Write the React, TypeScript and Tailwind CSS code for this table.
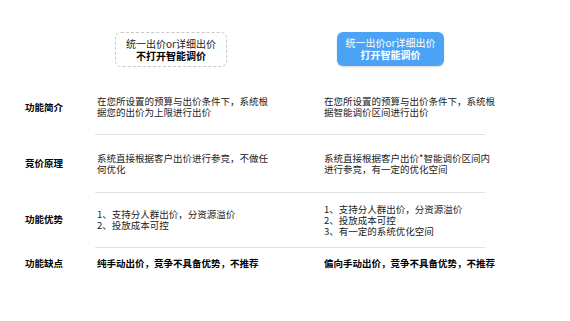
const rows = [
  {
    label: "功能简介",
    left: ["在您所设置的预算与出价条件下，系统根", "据您的出价为上限进行出价"],
    right: ["在您所设置的预算与出价条件下，系统根", "据智能调价区间进行出价"],
    h: "h-[54px]",
    top: false,
    bold: false,
  },
  {
    label: "竞价原理",
    left: ["系统直接根据客户出价进行参竞，不做任", "何优化"],
    right: ["系统直接根据客户出价*智能调价区间内", "进行参竞，有一定的优化空间"],
    h: "h-[58px]",
    top: true,
    bold: false,
  },
  {
    label: "功能优势",
    left: ["1、支持分人群出价，分资源溢价", "2、投放成本可控"],
    right: ["1、支持分人群出价，分资源溢价", "2、投放成本可控", "3、有一定的系统优化空间"],
    h: "h-[55px]",
    top: true,
    bold: false,
  },
  {
    label: "功能缺点",
    left: ["纯手动出价，竞争不具备优势，不推荐"],
    right: ["偏向手动出价，竞争不具备优势，不推荐"],
    h: "h-[32px]",
    top: true,
    bold: true,
  },
];

const Cell = ({ lines, top, bold, w }: { lines: string[]; top: boolean; bold: boolean; w: string }) => (
  <div
    className={`${w} flex flex-col justify-center pl-[2px] ${top ? "border-t border-[#e3e3e3]" : ""} ${
      bold ? "font-bold text-black" : "text-[#222]"
    }`}
  >
    {lines.map((l, i) => (
      <div key={i} className="whitespace-nowrap">
        {l}
      </div>
    ))}
  </div>
);

export default function App() {
  return (
    <div
      className="w-[570px] h-[321px] bg-white overflow-hidden pl-[25px] pt-[32px] text-[9.5px] leading-[11px]"
      style={{ fontFamily: '"Microsoft YaHei", "Noto Sans CJK SC", sans-serif' }}
    >
      {/* header */}
      <div className="flex h-[35px]">
        <div className="w-[70px]" />
        <div className="w-[227px] pl-[20px]">
          <div className="w-[112px] h-[35px] rounded-[6px] border border-dashed border-[#c8c8c8] flex flex-col items-center justify-center text-[10px] leading-[12px] text-[#222]">
            <div>统一出价or详细出价</div>
            <div className="font-bold text-black">不打开智能调价</div>
          </div>
        </div>
        <div className="w-[163px] pl-[15px]">
          <div className="w-[107px] h-[34px] rounded-[6px] bg-[#4ba3f6] shadow-[0_1px_2px_rgba(0,0,0,0.15)] flex flex-col items-center justify-center text-[10px] leading-[12px] text-white">
            <div>统一出价or详细出价</div>
            <div className="font-bold">打开智能调价</div>
          </div>
        </div>
      </div>

      <div className="mt-[13px]">
        {rows.map((r) => (
          <div key={r.label} className={`flex ${r.h}`}>
            <div className="w-[70px] flex items-center font-bold text-black">{r.label}</div>
            <Cell lines={r.left} top={r.top} bold={r.bold} w="w-[227px]" />
            <Cell lines={r.right} top={r.top} bold={r.bold} w="w-[163px]" />
          </div>
        ))}
      </div>
    </div>
  );
}
